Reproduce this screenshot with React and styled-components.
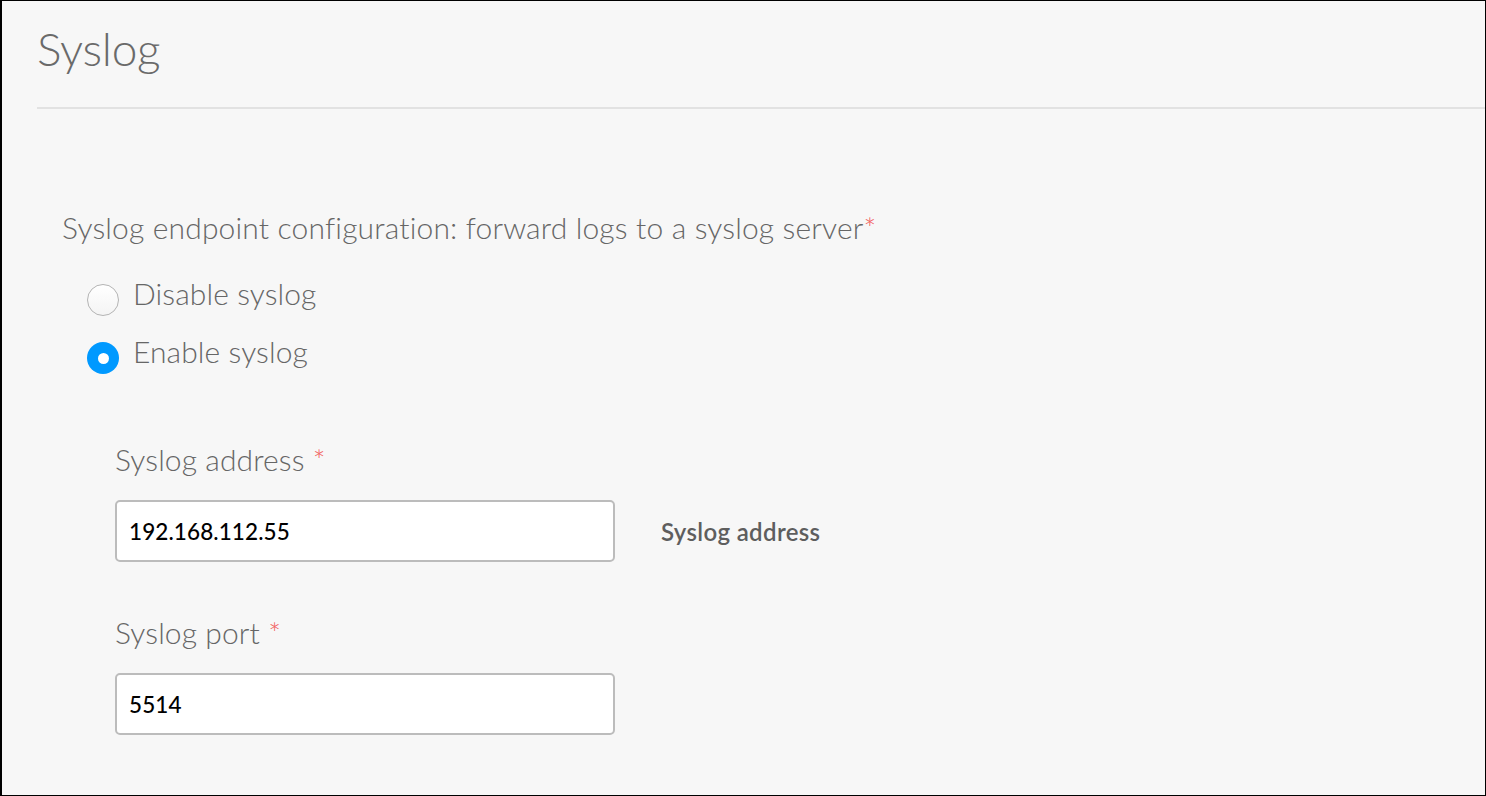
import React from 'react';
import styled, { createGlobalStyle } from 'styled-components';

const Global = createGlobalStyle`
  html, body {
    margin: 0;
    padding: 0;
    background: #f7f7f7;
  }
  * {
    box-sizing: border-box;
  }
`;

const Frame = styled.div`
  width: 1486px;
  height: 796px;
  overflow: hidden;
  background: #f7f7f7;
  border-top: 1px solid #000;
  border-left: 2px solid #000;
  border-right: 1px solid #000;
  border-bottom: 1px solid #000;
  font-family: Lato, 'Liberation Sans', sans-serif;
  color: #666;
`;

const Header = styled.div`
  padding: 20px 0 0 35px;
`;

const Title = styled.h1`
  margin: 0;
  font-size: 46px;
  font-weight: 300;
  line-height: 56px;
  color: #6a6a6a;
  letter-spacing: -0.3px;
`;

const Divider = styled.div`
  margin: 30px 0 0 35px;
  height: 2px;
  background: #e2e2e2;
`;

const Section = styled.div`
  padding: 100px 0 0 60px;
  display: flex;
  flex-direction: column;
`;

const Question = styled.div`
  font-size: 30px;
  font-weight: 300;
  line-height: 36px;
  letter-spacing: 0.16px;
`;

const Star = styled.span`
  color: #f25b5b;
`;

const Options = styled.div`
  margin-top: 19px;
  padding-left: 25px;
  display: flex;
  flex-direction: column;
`;

const Option = styled.label`
  display: flex;
  align-items: center;
  gap: 14px;
  height: 58px;
  font-size: 30px;
  font-weight: 300;
  letter-spacing: 0.1px;
  cursor: pointer;
`;

const Radio = styled.span`
  width: 32px;
  height: 32px;
  border-radius: 50%;
  display: flex;
  align-items: center;
  justify-content: center;
  flex-shrink: 0;
  margin-top: 14px;
  background: ${(p) => (p.checked ? '#0099ff' : 'linear-gradient(#fff, #f4f4f4)')};
  border: ${(p) => (p.checked ? 'none' : '1.5px solid #b4b4b4')};

  &::after {
    content: '';
    display: ${(p) => (p.checked ? 'block' : 'none')};
    width: 11px;
    height: 11px;
    border-radius: 50%;
    background: #fff;
  }
`;

const Fields = styled.div`
  padding-left: 53px;
  margin-top: 61px;
  display: flex;
  flex-direction: column;
  gap: 52px;
`;

const Field = styled.div`
  display: flex;
  flex-direction: column;
  gap: 23px;
`;

const FieldLabel = styled.div`
  font-size: 30px;
  font-weight: 300;
  line-height: 36px;
  letter-spacing: 0.1px;
`;

const InputRow = styled.div`
  display: flex;
  align-items: center;
  gap: 46px;
`;

const Input = styled.input`
  width: 500px;
  height: 62px;
  padding: 0 12px;
  border: 2px solid #bcbcbc;
  border-radius: 5px;
  background: #fff;
  font-family: Lato, 'Liberation Sans', sans-serif;
  font-size: 22.5px;
  font-weight: 500;
  letter-spacing: 0.1px;
  color: #000;
  outline: none;
`;

const Help = styled.div`
  font-size: 24px;
  font-weight: 600;
  color: #5e5e5e;
  letter-spacing: 0.35px;
`;

export default function App() {
  return (
    <Frame>
      <Global />
      <Header>
        <Title>Syslog</Title>
      </Header>
      <Divider />
      <Section>
        <Question>
          Syslog endpoint configuration: forward logs to a syslog server<Star>*</Star>
        </Question>
        <Options>
          <Option>
            <Radio />
            Disable syslog
          </Option>
          <Option>
            <Radio checked />
            Enable syslog
          </Option>
        </Options>
        <Fields>
          <Field>
            <FieldLabel>
              Syslog address <Star>*</Star>
            </FieldLabel>
            <InputRow>
              <Input defaultValue="192.168.112.55" />
              <Help>Syslog address</Help>
            </InputRow>
          </Field>
          <Field>
            <FieldLabel>
              Syslog port <Star>*</Star>
            </FieldLabel>
            <InputRow>
              <Input defaultValue="5514" />
            </InputRow>
          </Field>
        </Fields>
      </Section>
    </Frame>
  );
}
